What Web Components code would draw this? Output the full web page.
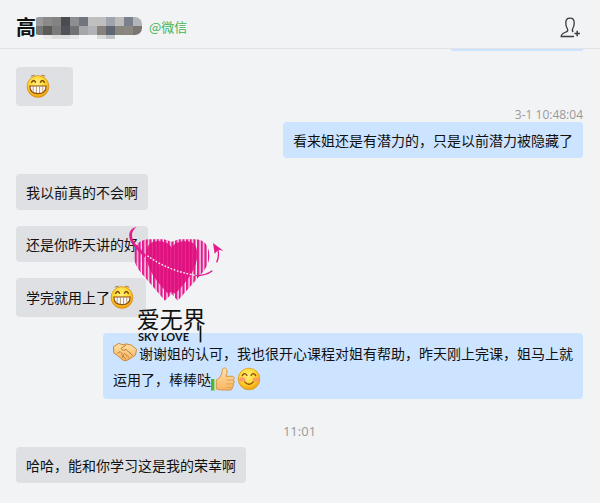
<!DOCTYPE html>
<html lang="zh-CN">
<head>
<meta charset="utf-8">
<meta name="viewport" content="width=device-width, initial-scale=1">
<title>微信</title>
<style>
    body {
        margin: 0;
        background: #f2f3f5;
        color: #111;
        font: 14px/22px "Noto Sans CJK SC", sans-serif;
    }
</style>
</head>
<body>

<template id="chat-header">
    <style>
        :host {
            display: flex;
            align-items: center;
            gap: 7px;
            box-sizing: border-box;
            height: 49px;
            padding: 6px 19px 0 16px;
            border-bottom: 1px solid #e2e3e5;
        }
        .name {
            display: flex;
            align-items: center;
            margin: 0;
            font-size: 20px;
            line-height: 24px;
            font-weight: bold;
        }
        .source {
            flex: 1;
            color: #3fb558;
            font-size: 13px;
        }
        button {
            display: flex;
            padding: 0;
            border: 0;
            background: none;
            cursor: pointer;
        }
    </style>
    <h1 class="name">
        <slot></slot>
        <svg class="mask" width="106" height="24" viewBox="0 0 106 24" aria-hidden="true"></svg>
    </h1>
    <span class="source"></span>
    <button type="button" aria-label="添加成员">
        <svg width="21" height="21" viewBox="1 0 21 21" fill="none" stroke="#3a3a3a" stroke-width="1.3">
            <path d="M15 19.5H2.2C2.2 16.6 4.6 16 7.2 14.900C9 14 9.200 13.200 8.200 11.500C7 9.600 6.800 8 6.800 5.800C6.800 3 8.400 1.200 11 1.200S15.200 3 15.200 5.800C15.200 8 15 9.600 13.800 11.500C13 12.900 13.100 14 14.200 14.900"/>
            <path d="M18.2 13.800v5.400M15.500 16.500h5.400" stroke-width="1.5"/>
        </svg>
    </button>
</template>

<template id="chat-message">
    <style>
        :host {
            display: flex;
            position: relative;
            --bubble: #dee0e4;
        }
        :host([mine]) {
            justify-content: flex-end;
            --bubble: #cce4ff;
        }
        :host([long]) {
            line-height: 26px;
        }
        .bubble {
            box-sizing: border-box;
            min-width: 57px;
            max-width: 480px;
            padding: 7px 10px;
            border-radius: 4px;
            background: var(--bubble);
        }
        :host([clipped]) .bubble {
            width: 132px;
            height: 2px;
            padding: 0;
            border-radius: 0 0 4px 4px;
        }
        time {
            position: absolute;
            right: 0;
            bottom: 100%;
            color: #999;
            font: 12px/14px "Open Sans", sans-serif;
        }
        time:empty {
            display: none;
        }
    </style>
    <time></time>
    <div class="bubble"><slot></slot></div>
</template>

<template id="chat-divider">
    <style>
        :host {
            display: block;
            margin: 8px 0 -8px;
            color: #999;
            text-align: center;
            font: 13px/16px "Open Sans", sans-serif;
        }
    </style>
    <slot></slot>
</template>

<template id="sky-logo">
    <style>
        :host {
            display: block;
            position: absolute;
            left: 120px;
            top: 215px;
            width: 110px;
            height: 130px;
            color: #111;
            pointer-events: none;
        }
        svg {
            display: block;
        }
    </style>
    <svg width="110" height="130" viewBox="0 0 330 390">
        <defs>
            <pattern id="wide" width="11" height="10" patternUnits="userSpaceOnUse">
                <rect width="7" height="10" fill="#e5188c"/>
            </pattern>
            <pattern id="tight" width="11" height="10" patternUnits="userSpaceOnUse">
                <rect width="11" height="10" fill="#e0107f"/>
                <rect x="8" width="2" height="10" fill="#e83a9c"/>
            </pattern>
        </defs>
        <path fill="url(#wide)" d="M42 122C42 94 56 74 84 73H132L155 80L178 73H228C254 74 268 94 268 122C268 150 250 170 238 184L173 257L155 236L135 257L72 184C60 170 42 150 42 122Z"/>
        <path fill="url(#tight)" d="M79 118C79 94 90 79 110 79C133 79 148 84 155 98C162 84 178 79 200 79C222 79 232 94 232 118C232 160 204 196 166 236L155 230L144 236C106 196 79 160 79 118Z"/>
        <path fill="none" stroke="#fff" stroke-width="4" stroke-dasharray="5 5" d="M82 122Q145 168 228 181"/>
        <path fill="#e5188c" d="M50 36C25 40 22 66 36 86C48 104 62 112 72 128L78 120C66 104 50 94 42 80C32 62 34 48 50 36Z"/>
        <path fill="none" stroke="#e5188c" stroke-width="4" d="M226 182Q258 182 277 167M290 142Q299 124 293 100"/>
        <path fill="#e5188c" d="M279 84L310 107L295 104L284 116Z"/>
        <g fill="#111">
            <text x="50" y="339" font-family="Noto Sans CJK SC, sans-serif" font-size="69">爱无界</text>
            <text x="54" y="378" font-family="Lato, sans-serif" font-size="33" font-weight="bold">SKY LOVE</text>
            <path d="M239 332h5v50h-5z"/>
        </g>
    </svg>
</template>

<template id="chat-emoji">
    <style>
        :host {
            display: inline-block;
            width: 24px;
            height: 24px;
            margin: 0 2px 1px 0;
            vertical-align: -7px;
        }
        svg {
            display: block;
        }
    </style>
    <svg width="24" height="24" viewBox="0 0 25 25">
        <defs>
            <radialGradient id="face" cx=".45" cy=".35" r=".65">
                <stop offset="0" stop-color="#fff27a"/>
                <stop offset=".6" stop-color="#ffd52e"/>
                <stop offset="1" stop-color="#ee9d12"/>
            </radialGradient>
            <linearGradient id="skin" x2="0" y2="1">
                <stop offset="0" stop-color="#ffe2a8"/>
                <stop offset="1" stop-color="#f7b560"/>
            </linearGradient>
        </defs>
        <g></g>
    </svg>
</template>

<script type="text/javascript">
    // Each row of the mask: y, height, then one colour per column
    const MASK_ROWS = [
        [2, 9, ['#9a9a9c', '#8a8a8a', '#838383', '#4b4b50', '#8c8e92', '#70747f', '#c0c0c0', '#bebebe', '#a0a4ac', '#bcbcbc', '#7a808c', '#b2b6ba']],
        [11, 9, ['#777773', '#5a5a58', '#7a7a78', '#505258', '#707274', '#a4a6a8', '#b0b4b8', '#88807c', '#5e6672', '#88847e', '#8a8680', '#7a7672']],
    ];
    const MASK_SHADOW = { 1: '#e8e8ea', 2: '#dcdddd', 3: '#dcdddd', 4: '#e6e6e8', 7: '#dadada', 8: '#c0c4c8' };

    const EMOJI = {
        grin: `
            <circle cx="12.5" cy="13" r="11.3" fill="url(#face)" stroke="#d98a12" stroke-width=".8"/>
            <path d="M5 2.2l4-1M16 1.2l4 1" stroke="#a8742a" stroke-width="1"/>
            <path d="M5.5 9.2Q8 4.5 10.2 9M14.8 9Q17 4.5 19.5 9.2" fill="none" stroke="#7c4308" stroke-width="1.5"/>
            <path d="M4 12.5H21Q21 20.5 12.5 20.5T4 12.5Z" fill="#fff" stroke="#8d4b0c" stroke-width="1.2"/>
            <path d="M7.5 13v5.5M10.8 13v7M14.2 13v7M17.5 13v5.5" stroke="#a5764a" stroke-width=".8"/>`,
        smile: `
            <circle cx="12.5" cy="12.5" r="11.3" fill="url(#face)" stroke="#e09a1c" stroke-width=".8"/>
            <ellipse cx="5.5" cy="13" rx="3.2" ry="2.3" fill="#ff8f76" opacity=".8"/>
            <ellipse cx="19.5" cy="13" rx="3.2" ry="2.3" fill="#ff8f76" opacity=".8"/>
            <path d="M5.5 9Q8 5 10.3 8.8M14.7 8.8Q17 5 19.5 9M8 15.5Q12.5 20.5 17 15.5" fill="none" stroke="#8a4b0c" stroke-width="1.4" stroke-linecap="round"/>`,
        thumb: `
            <path d="M0 12.5h5v12H0z" fill="#4fb53a"/>
            <path d="M3.5 12.5h2v12h-2z" fill="#dff0cf"/>
            <path d="M5.5 13.5C8.5 12.5 11 9 11.5 5C11.6 2.5 12.3 1 14 1C17.3 1 17.2 6 15.5 9.7H22C24.6 9.7 24.8 13 23 13.6C24.8 14.5 24.5 17 22.7 17.6C24 18.7 23.6 20.7 22 21.2C22.7 23 21.5 24 19.5 24H12C9 24 7.8 23.2 5.5 23Z" fill="url(#skin)" stroke="#d58b35" stroke-width=".9"/>
            <path d="M16 13.6h7M16 17.6h6.7M16 21.2h6" stroke="#dc9a4a" stroke-width=".8"/>`,
        shake: `
            <path d="M.5 6L6 2.5L10.5 4L14 3L19.5 4.5L24.5 8.5L23.5 14.5L20 17L14 20.5L10.5 20L4.5 15L.8 12.5Z" fill="url(#skin)" stroke="#c98336" stroke-width="1" stroke-linejoin="round"/>
            <path d="M14 4L8.5 7.5Q9.5 11 13.5 8.8L20.5 15M11.5 12.5L17 17.5M8.5 14L13.5 19M4.5 13L7.5 11L11 14.5L9.5 17.5" fill="none" stroke="#bd772e" stroke-width="1"/>`,
    };

    // Open a shadow root on the element and fill it from its template
    function attachTemplate(el, id) {
        const shadow = el.attachShadow({mode: 'open'});
        shadow.appendChild(document.getElementById(id).content.cloneNode(true));
        return shadow;
    }

    class ChatHeader extends HTMLElement {
        constructor() {
            super();
            this.root = attachTemplate(this, 'chat-header');
        }

        connectedCallback() {
            this.root.querySelector('.source').innerText = this.getAttribute('data-source');

            let cells = '';
            for (const [y, height, colours] of MASK_ROWS) {
                colours.forEach((fill, i) => {
                    cells += `<rect x="${i * 9 - 2}" y="${y}" width="9" height="${height}" fill="${fill}"/>`;
                });
            }
            let shadow = '';
            for (const i in MASK_SHADOW) {
                shadow += `<rect x="${i * 9 - 2}" y="19" width="9" height="6" fill="${MASK_SHADOW[i]}"/>`;
            }
            this.root.querySelector('.mask').innerHTML = `
                <clipPath id="pill"><rect x="-4" y="2" width="110" height="18" rx="7"/></clipPath>
                ${shadow}<g clip-path="url(#pill)">${cells}</g>`;
        }
    }

    class ChatMessage extends HTMLElement {
        constructor() {
            super();
            this.root = attachTemplate(this, 'chat-message');
        }

        connectedCallback() {
            this.root.querySelector('time').textContent = this.getAttribute('data-time') || '';
        }
    }

    class ChatDivider extends HTMLElement {
        constructor() {
            super();
            attachTemplate(this, 'chat-divider');
        }
    }

    class ChatEmoji extends HTMLElement {
        constructor() {
            super();
            this.root = attachTemplate(this, 'chat-emoji');
        }

        connectedCallback() {
            this.root.querySelector('g').innerHTML = EMOJI[this.getAttribute('name')];
        }
    }

    class SkyLogo extends HTMLElement {
        constructor() {
            super();
            attachTemplate(this, 'sky-logo');
        }
    }

    class ChatWindow extends HTMLElement {
        constructor() {
            super();
            this.attachShadow({mode: 'open'}).innerHTML = `
                <style>
                    :host {
                        display: block;
                        position: relative;
                    }
                    main {
                        display: flex;
                        flex-direction: column;
                        gap: 16px;
                        padding: 0 17px 16px 16px;
                    }
                </style>
                <slot name="header"></slot>
                <main><slot></slot></main>
                <slot name="overlay"></slot>`;
        }
    }

    customElements.define('chat-header', ChatHeader);
    customElements.define('chat-message', ChatMessage);
    customElements.define('chat-divider', ChatDivider);
    customElements.define('chat-emoji', ChatEmoji);
    customElements.define('sky-logo', SkyLogo);
    customElements.define('chat-window', ChatWindow);
</script>

<chat-window>
    <chat-header slot="header" data-source="@微信">高</chat-header>
    <chat-message mine clipped></chat-message>
    <chat-message><chat-emoji name="grin"></chat-emoji></chat-message>
    <chat-message mine data-time="3-1 10:48:04">看来姐还是有潜力的，只是以前潜力被隐藏了</chat-message>
    <chat-message>我以前真的不会啊</chat-message>
    <chat-message>还是你昨天讲的好</chat-message>
    <chat-message>学完就用上了<chat-emoji name="grin"></chat-emoji></chat-message>
    <chat-message mine long><chat-emoji name="shake"></chat-emoji>谢谢姐的认可，我也很开心课程对姐有帮助，昨天刚上完课，姐马上就运用了，棒棒哒<chat-emoji name="thumb"></chat-emoji><chat-emoji name="smile"></chat-emoji></chat-message>
    <chat-divider>11:01</chat-divider>
    <chat-message>哈哈，能和你学习这是我的荣幸啊</chat-message>
    <sky-logo slot="overlay"></sky-logo>
</chat-window>

</body>
</html>
